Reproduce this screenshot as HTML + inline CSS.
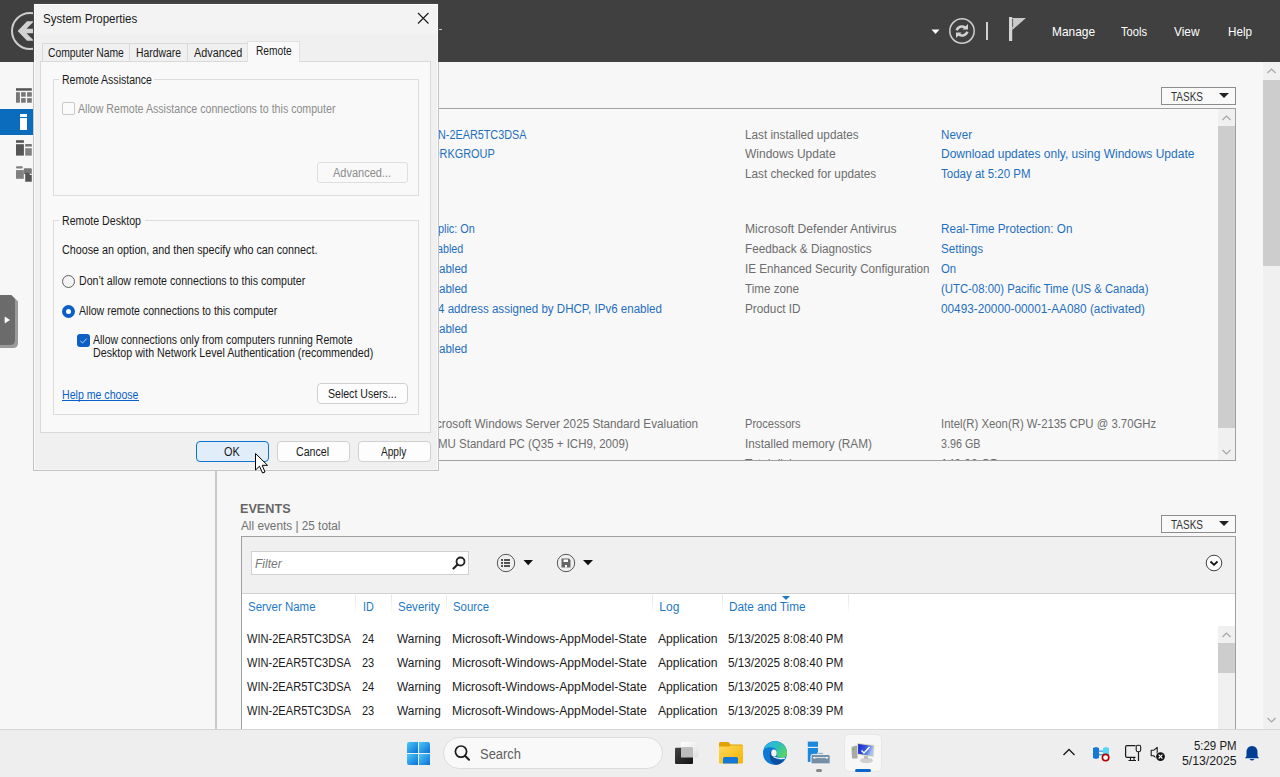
<!DOCTYPE html><html><head><meta charset="utf-8"><style>
html,body{margin:0;padding:0;width:1280px;height:777px;overflow:hidden;background:#f7f7f7;font-family:"Liberation Sans",sans-serif;}
div{position:absolute;box-sizing:border-box;}
.t{white-space:pre;transform-origin:0 0;}
svg{position:absolute;}
</style></head><body>
<div style="left:0px;top:0px;width:1280px;height:62px;background:#404040;"></div>
<svg style="left:0;top:0" width="60" height="62"><circle cx="30" cy="31" r="18" fill="none" stroke="#cdcdcd" stroke-width="2"/><path d="M17.7 31 L27 21.3 L34 21.3 L26.5 28.8 L42 28.8 L42 33.2 L26.5 33.2 L34 40.8 L27 40.8 Z" fill="#d2d2d2"/></svg>
<div style="left:439px;top:29px;width:3px;height:1px;background:#c8c8c8"></div>
<svg style="left:930px;top:28px" width="12" height="8"><path d="M1.5 1.5 L9.5 1.5 L5.5 6 Z" fill="#fff"/></svg>
<svg style="left:945px;top:15px" width="35" height="33"><circle cx="17" cy="16" r="12.2" fill="none" stroke="#cfcfcf" stroke-width="1.5"/>
<path d="M11.6 15.2 A5.6 5.6 0 0 1 20.2 12.6" fill="none" stroke="#d2d2d2" stroke-width="2.6"/><path d="M17.4 14.5 L23 14.5 L23 9 Z" fill="#d2d2d2"/>
<path d="M22.4 16.8 A5.6 5.6 0 0 1 13.8 19.4" fill="none" stroke="#d2d2d2" stroke-width="2.6"/><path d="M16.6 17.5 L11 17.5 L11 23 Z" fill="#d2d2d2"/></svg>
<div style="left:986px;top:22px;width:2px;height:18px;background:#d0d0d0;"></div>
<svg style="left:1008px;top:16px" width="20" height="26"><rect x="1" y="1" width="3.2" height="24" fill="#d4d4d4"/><path d="M4.2 2 L18 2 L4.2 14 Z" fill="#c9c9c9"/><rect x="4.2" y="3" width="0.9" height="8" fill="#555"/></svg>
<div class="t" style="left:1052px;top:25px;font-size:13px;line-height:13px;color:#ffffff;transform:scaleX(0.9154);">Manage</div>
<div class="t" style="left:1121px;top:25px;font-size:13px;line-height:13px;color:#ffffff;transform:scaleX(0.8568);">Tools</div>
<div class="t" style="left:1174px;top:25px;font-size:13px;line-height:13px;color:#ffffff;transform:scaleX(0.9126);">View</div>
<div class="t" style="left:1228px;top:25px;font-size:13px;line-height:13px;color:#ffffff;transform:scaleX(0.8977);">Help</div>
<div style="left:0px;top:109px;width:34px;height:26px;background:#0b6bbd;"></div>
<svg style="left:14px;top:86px" width="20" height="100">
<rect x="2" y="2.2" width="15.8" height="2.5" fill="#555"/>
<rect x="2" y="6.2" width="3.9" height="10.5" fill="#777"/><rect x="7.1" y="6.2" width="4.6" height="4.5" fill="#777"/><rect x="13.1" y="6.2" width="4.7" height="4.5" fill="#777"/>
<rect x="7.1" y="12.1" width="4.6" height="4.6" fill="#777"/><rect x="13.1" y="12.1" width="4.7" height="4.6" fill="#777"/>
<rect x="6" y="28" width="7" height="3" fill="#fff"/><rect x="6" y="32" width="7" height="12" fill="#fff"/>
<rect x="2" y="54.2" width="7.9" height="2.6" fill="#555"/><rect x="2" y="58.2" width="7.9" height="11.4" fill="#555"/><rect x="11.2" y="58" width="6.6" height="2.6" fill="#777"/><rect x="11.2" y="62.2" width="6.6" height="7.4" fill="#808080"/>
<rect x="2" y="80.2" width="6.8" height="2.4" rx="1" fill="#808080"/><rect x="2" y="84.1" width="7.8" height="8.7" fill="#808080"/><path d="M9.8 88 L9.8 83.2 Q9.8 82.2 10.8 82.2 L16.8 82.2 Q17.8 82.2 17.8 83.2 L17.8 88 Z" fill="#777"/>
<path d="M11.2 87 L15.8 87 L17.8 89 L17.8 95.8 L11.2 95.8 Z" fill="#555"/><path d="M15.8 87 L17.8 89 L15.8 89 Z" fill="#fff"/>
</svg>
<svg style="left:0;top:294px" width="20" height="56"><path d="M0 1 L11.5 1 L18 7.5 L18 49 Q18 54 13 54 L0 54 Z" fill="#9a9a9a"/><path d="M0 1 L11 1 L15 5 L15 46 Q15 51 10 51 L0 51 Z" fill="#6b6b6b"/><path d="M4.7 22.6 L10 26 L4.7 29.4 Z" fill="#fff"/></svg>
<div style="left:215px;top:62px;width:2px;height:667px;background:#c9c9c9;"></div>
<div style="left:1263px;top:62px;width:17px;height:667px;background:#f0f0f0;"></div>
<div style="left:1263px;top:80px;width:17px;height:186px;background:#cdcdcd;"></div>
<svg style="left:1263px;top:62px" width="17" height="18"><path d="M4.5 11 L8.5 7 L12.5 11" fill="none" stroke="#a6a6a6" stroke-width="1.2"/></svg>
<svg style="left:1263px;top:711px" width="17" height="18"><path d="M4.5 7 L8.5 11 L12.5 7" fill="none" stroke="#a6a6a6" stroke-width="1.2"/></svg>
<div style="left:1161px;top:87px;width:75px;height:18px;border:1px solid #8c8c8c;background:#f9f9f9;"></div>
<div class="t" style="left:1171px;top:91px;font-size:12px;line-height:12px;color:#333;transform:scaleX(0.8321);">TASKS</div>
<svg style="left:1218px;top:92px" width="12" height="8"><path d="M1 1 L11 1 L6 6 Z" fill="#222"/></svg>
<div style="left:241px;top:108px;width:995px;height:353px;border:1px solid #a0a0a0;border-right-width:1px;background:#f8f8f8;"></div>
<div style="left:1218px;top:109px;width:17px;height:351px;background:#f0f0f0;"></div>
<div style="left:1218px;top:126px;width:17px;height:302px;background:#cdcdcd;"></div>
<svg style="left:1218px;top:109px" width="17" height="17"><path d="M4.5 11 L8.5 7 L12.5 11" fill="none" stroke="#a6a6a6" stroke-width="1.2"/></svg>
<svg style="left:1218px;top:443px" width="17" height="17"><path d="M4.5 7 L8.5 11 L12.5 7" fill="none" stroke="#a6a6a6" stroke-width="1.2"/></svg>
<div class="t" style="left:437.8px;top:129px;font-size:12px;line-height:12px;color:#1f6fbf;transform:scaleX(0.9028);">N-2EAR5TC3DSA</div>
<div class="t" style="left:431.19309641532755px;top:148px;font-size:12px;line-height:12px;color:#1f6fbf;transform:scaleX(0.9114);">ORKGROUP</div>
<div class="t" style="left:438.45615592435354px;top:223px;font-size:12px;line-height:12px;color:#1f6fbf;transform:scaleX(0.9057);">plic: On</div>
<div class="t" style="left:437.3286222001818px;top:243px;font-size:12px;line-height:12px;color:#1f6fbf;transform:scaleX(0.8948);">abled</div>
<div class="t" style="left:439.0px;top:263px;font-size:12px;line-height:12px;color:#1f6fbf;transform:scaleX(0.9639);">abled</div>
<div class="t" style="left:439.0px;top:283px;font-size:12px;line-height:12px;color:#1f6fbf;transform:scaleX(0.9639);">abled</div>
<div class="t" style="left:438.3px;top:303px;font-size:12px;line-height:12px;color:#1f6fbf;transform:scaleX(0.9627);">4 address assigned by DHCP, IPv6 enabled</div>
<div class="t" style="left:439.0px;top:323px;font-size:12px;line-height:12px;color:#1f6fbf;transform:scaleX(0.9639);">abled</div>
<div class="t" style="left:439.0px;top:343px;font-size:12px;line-height:12px;color:#1f6fbf;transform:scaleX(0.9639);">abled</div>
<div class="t" style="left:435.8356642656347px;top:418px;font-size:12px;line-height:12px;color:#6d6d6d;transform:scaleX(0.9774);">crosoft Windows Server 2025 Standard Evaluation</div>
<div class="t" style="left:438.1px;top:438px;font-size:12px;line-height:12px;color:#6d6d6d;transform:scaleX(0.9574);">MU Standard PC (Q35 + ICH9, 2009)</div>
<div class="t" style="left:745.4px;top:129px;font-size:12px;line-height:12px;color:#6d6d6d;transform:scaleX(0.9787);">Last installed updates</div>
<div class="t" style="left:745.4px;top:148px;font-size:12px;line-height:12px;color:#6d6d6d;transform:scaleX(0.9988);">Windows Update</div>
<div class="t" style="left:745.4px;top:168px;font-size:12px;line-height:12px;color:#6d6d6d;transform:scaleX(0.9778);">Last checked for updates</div>
<div class="t" style="left:745.4px;top:223px;font-size:12px;line-height:12px;color:#6d6d6d;transform:scaleX(1.0103);">Microsoft Defender Antivirus</div>
<div class="t" style="left:745.4px;top:243px;font-size:12px;line-height:12px;color:#6d6d6d;transform:scaleX(0.9784);">Feedback &amp; Diagnostics</div>
<div class="t" style="left:745.4px;top:263px;font-size:12px;line-height:12px;color:#6d6d6d;transform:scaleX(0.9700);">IE Enhanced Security Configuration</div>
<div class="t" style="left:745.4px;top:283px;font-size:12px;line-height:12px;color:#6d6d6d;transform:scaleX(0.9717);">Time zone</div>
<div class="t" style="left:745.4px;top:303px;font-size:12px;line-height:12px;color:#6d6d6d;transform:scaleX(0.9808);">Product ID</div>
<div class="t" style="left:745.4px;top:418px;font-size:12px;line-height:12px;color:#6d6d6d;transform:scaleX(0.9264);">Processors</div>
<div class="t" style="left:745.4px;top:438px;font-size:12px;line-height:12px;color:#6d6d6d;transform:scaleX(0.9811);">Installed memory (RAM)</div>
<div class="t" style="left:940.9px;top:129px;font-size:12px;line-height:12px;color:#1f6fbf;transform:scaleX(0.9685);">Never</div>
<div class="t" style="left:940.9px;top:148px;font-size:12px;line-height:12px;color:#1f6fbf;transform:scaleX(1.0006);">Download updates only, using Windows Update</div>
<div class="t" style="left:940.9px;top:168px;font-size:12px;line-height:12px;color:#1f6fbf;transform:scaleX(0.9584);">Today at 5:20 PM</div>
<div class="t" style="left:940.9px;top:223px;font-size:12px;line-height:12px;color:#1f6fbf;transform:scaleX(0.9738);">Real-Time Protection: On</div>
<div class="t" style="left:940.9px;top:243px;font-size:12px;line-height:12px;color:#1f6fbf;transform:scaleX(0.9710);">Settings</div>
<div class="t" style="left:940.9px;top:263px;font-size:12px;line-height:12px;color:#1f6fbf;transform:scaleX(0.9433);">On</div>
<div class="t" style="left:940.9px;top:283px;font-size:12px;line-height:12px;color:#1f6fbf;transform:scaleX(0.9454);">(UTC-08:00) Pacific Time (US &amp; Canada)</div>
<div class="t" style="left:940.9px;top:303px;font-size:12px;line-height:12px;color:#1f6fbf;transform:scaleX(0.9833);">00493-20000-00001-AA080 (activated)</div>
<div class="t" style="left:940.9px;top:418px;font-size:12px;line-height:12px;color:#6d6d6d;transform:scaleX(0.9465);">Intel(R) Xeon(R) W-2135 CPU @ 3.70GHz</div>
<div class="t" style="left:940.9px;top:438px;font-size:12px;line-height:12px;color:#6d6d6d;transform:scaleX(0.8949);">3.96 GB</div>
<div style="left:700px;top:455px;width:500px;height:5px;overflow:hidden">
<div class="t" style="left:45px;top:3px;font-size:12px;line-height:12px;color:#6d6d6d;">Total disk space</div>
<div class="t" style="left:241px;top:3px;font-size:12px;line-height:12px;color:#6d6d6d;">148.92 GB</div>
</div>
<div class="t" style="left:240.4px;top:502px;font-size:13.5px;line-height:13.5px;color:#666;font-weight:bold;transform:scaleX(0.9368);">EVENTS</div>
<div class="t" style="left:240.6px;top:520px;font-size:12px;line-height:12px;color:#707070;transform:scaleX(0.9825);">All events | 25 total</div>
<div style="left:1161px;top:515px;width:75px;height:18px;border:1px solid #8c8c8c;background:#f9f9f9;"></div>
<div class="t" style="left:1171px;top:519px;font-size:12px;line-height:12px;color:#333;transform:scaleX(0.8321);">TASKS</div>
<svg style="left:1218px;top:520px" width="12" height="8"><path d="M1 1 L11 1 L6 6 Z" fill="#222"/></svg>
<div style="left:241px;top:536px;width:995px;height:194px;border:1px solid #a0a0a0;border-bottom:none;background:#fff;"></div>
<div style="left:242px;top:537px;width:993px;height:57px;background:#f0f0f0;border-bottom:1px solid #d2d2d2;"></div>
<div style="left:251px;top:551px;width:218px;height:24px;background:#fff;border:1px solid #d0d0d0;"></div>
<div class="t" style="left:255px;top:558px;font-size:12px;line-height:12px;color:#777;font-style:italic;">Filter</div>
<svg style="left:451px;top:555px" width="16" height="16"><circle cx="9.5" cy="6.5" r="4" fill="none" stroke="#222" stroke-width="1.8"/><path d="M6.5 9.5 L2.5 13.5" stroke="#222" stroke-width="2.2" stroke-linecap="round"/></svg>
<svg style="left:495px;top:552px" width="42" height="22"><circle cx="11" cy="11" r="8.7" fill="none" stroke="#555" stroke-width="1"/>
<rect x="6" y="7" width="2" height="2" fill="#555"/><rect x="9" y="7" width="6" height="2" fill="#555"/>
<rect x="6" y="10" width="2" height="2" fill="#555"/><rect x="9" y="10" width="6" height="2" fill="#555"/>
<rect x="6" y="13" width="2" height="2" fill="#555"/><rect x="9" y="13" width="6" height="2" fill="#555"/>
<path d="M28.5 8 L38 8 L33.2 13.3 Z" fill="#111"/></svg>
<svg style="left:555px;top:552px" width="42" height="22"><circle cx="11" cy="11" r="8.7" fill="none" stroke="#555" stroke-width="1"/>
<path d="M6.5 6.5 L14 6.5 L15.5 8 L15.5 15.5 L6.5 15.5 Z" fill="#666"/><rect x="8.5" y="7.5" width="4.5" height="2.5" fill="#fff"/><rect x="10" y="13" width="2" height="2.5" fill="#fff"/>
<path d="M28 8 L38 8 L33 13.3 Z" fill="#111"/></svg>
<svg style="left:1204px;top:553px" width="20" height="20"><circle cx="10" cy="10" r="7.8" fill="#fff" stroke="#444" stroke-width="1"/><path d="M6.5 8.5 L10 11.8 L13.5 8.5" fill="none" stroke="#111" stroke-width="1.8"/></svg>
<div class="t" style="left:248.1px;top:601px;font-size:12px;line-height:12px;color:#1e78c8;transform:scaleX(0.9550);">Server Name</div>
<div class="t" style="left:362.9px;top:601px;font-size:12px;line-height:12px;color:#1e78c8;transform:scaleX(0.9000);">ID</div>
<div class="t" style="left:398.4px;top:601px;font-size:12px;line-height:12px;color:#1e78c8;transform:scaleX(0.9620);">Severity</div>
<div class="t" style="left:452.7px;top:601px;font-size:12px;line-height:12px;color:#1e78c8;transform:scaleX(0.9495);">Source</div>
<div class="t" style="left:659.3px;top:601px;font-size:12px;line-height:12px;color:#1e78c8;">Log</div>
<div class="t" style="left:729.4px;top:601px;font-size:12px;line-height:12px;color:#1e78c8;transform:scaleX(0.9816);">Date and Time</div>
<div style="left:355px;top:595px;width:1px;height:20px;background:linear-gradient(#e4e4e4,#fff);"></div>
<div style="left:391px;top:595px;width:1px;height:20px;background:linear-gradient(#e4e4e4,#fff);"></div>
<div style="left:446px;top:595px;width:1px;height:20px;background:linear-gradient(#e4e4e4,#fff);"></div>
<div style="left:652px;top:595px;width:1px;height:20px;background:linear-gradient(#e4e4e4,#fff);"></div>
<div style="left:722px;top:595px;width:1px;height:20px;background:linear-gradient(#e4e4e4,#fff);"></div>
<div style="left:848px;top:595px;width:1px;height:20px;background:linear-gradient(#e4e4e4,#fff);"></div>
<svg style="left:781px;top:595px" width="10" height="6"><path d="M1 1 L9 1 L5 5 Z" fill="#1e78c8"/></svg>
<div class="t" style="left:247px;top:633px;font-size:12px;line-height:12px;color:#1a1a1a;transform:scaleX(0.9229);">WIN-2EAR5TC3DSA</div>
<div class="t" style="left:361.7px;top:633px;font-size:12px;line-height:12px;color:#1a1a1a;transform:scaleX(0.9141);">24</div>
<div class="t" style="left:397.4px;top:633px;font-size:12px;line-height:12px;color:#1a1a1a;transform:scaleX(0.9901);">Warning</div>
<div class="t" style="left:452.4px;top:633px;font-size:12px;line-height:12px;color:#1a1a1a;transform:scaleX(1.0173);">Microsoft-Windows-AppModel-State</div>
<div class="t" style="left:657.9px;top:633px;font-size:12px;line-height:12px;color:#1a1a1a;transform:scaleX(1.0119);">Application</div>
<div class="t" style="left:728.4px;top:633px;font-size:12px;line-height:12px;color:#1a1a1a;transform:scaleX(0.9756);">5/13/2025 8:08:40 PM</div>
<div class="t" style="left:247px;top:657px;font-size:12px;line-height:12px;color:#1a1a1a;transform:scaleX(0.9229);">WIN-2EAR5TC3DSA</div>
<div class="t" style="left:361.7px;top:657px;font-size:12px;line-height:12px;color:#1a1a1a;transform:scaleX(0.9141);">23</div>
<div class="t" style="left:397.4px;top:657px;font-size:12px;line-height:12px;color:#1a1a1a;transform:scaleX(0.9901);">Warning</div>
<div class="t" style="left:452.4px;top:657px;font-size:12px;line-height:12px;color:#1a1a1a;transform:scaleX(1.0173);">Microsoft-Windows-AppModel-State</div>
<div class="t" style="left:657.9px;top:657px;font-size:12px;line-height:12px;color:#1a1a1a;transform:scaleX(1.0119);">Application</div>
<div class="t" style="left:728.4px;top:657px;font-size:12px;line-height:12px;color:#1a1a1a;transform:scaleX(0.9756);">5/13/2025 8:08:40 PM</div>
<div class="t" style="left:247px;top:681px;font-size:12px;line-height:12px;color:#1a1a1a;transform:scaleX(0.9229);">WIN-2EAR5TC3DSA</div>
<div class="t" style="left:361.7px;top:681px;font-size:12px;line-height:12px;color:#1a1a1a;transform:scaleX(0.9141);">24</div>
<div class="t" style="left:397.4px;top:681px;font-size:12px;line-height:12px;color:#1a1a1a;transform:scaleX(0.9901);">Warning</div>
<div class="t" style="left:452.4px;top:681px;font-size:12px;line-height:12px;color:#1a1a1a;transform:scaleX(1.0173);">Microsoft-Windows-AppModel-State</div>
<div class="t" style="left:657.9px;top:681px;font-size:12px;line-height:12px;color:#1a1a1a;transform:scaleX(1.0119);">Application</div>
<div class="t" style="left:728.4px;top:681px;font-size:12px;line-height:12px;color:#1a1a1a;transform:scaleX(0.9756);">5/13/2025 8:08:40 PM</div>
<div class="t" style="left:247px;top:705px;font-size:12px;line-height:12px;color:#1a1a1a;transform:scaleX(0.9229);">WIN-2EAR5TC3DSA</div>
<div class="t" style="left:361.7px;top:705px;font-size:12px;line-height:12px;color:#1a1a1a;transform:scaleX(0.9141);">23</div>
<div class="t" style="left:397.4px;top:705px;font-size:12px;line-height:12px;color:#1a1a1a;transform:scaleX(0.9901);">Warning</div>
<div class="t" style="left:452.4px;top:705px;font-size:12px;line-height:12px;color:#1a1a1a;transform:scaleX(1.0173);">Microsoft-Windows-AppModel-State</div>
<div class="t" style="left:657.9px;top:705px;font-size:12px;line-height:12px;color:#1a1a1a;transform:scaleX(1.0119);">Application</div>
<div class="t" style="left:728.4px;top:705px;font-size:12px;line-height:12px;color:#1a1a1a;transform:scaleX(0.9756);">5/13/2025 8:08:39 PM</div>
<div style="left:1218px;top:626px;width:17px;height:103px;background:#f0f0f0;"></div>
<div style="left:1218px;top:643px;width:17px;height:30px;background:#cdcdcd;"></div>
<svg style="left:1218px;top:626px" width="17" height="17"><path d="M4.5 11 L8.5 7 L12.5 11" fill="none" stroke="#a6a6a6" stroke-width="1.2"/></svg>
<div style="left:0px;top:729px;width:1280px;height:48px;background:#eeeeee;border-top:1px solid #d6d6d6;"></div>
<svg style="left:407px;top:742px" width="24" height="24"><defs><linearGradient id="wg" x1="0" y1="0" x2="1" y2="1"><stop offset="0" stop-color="#4ccaf9"/><stop offset="1" stop-color="#0a6fd6"/></linearGradient></defs>
<g fill="url(#wg)"><path d="M0 2 Q0 0 2 0 L11 0 L11 11 L0 11 Z"/><path d="M12 0 L21 0 Q23 0 23 2 L23 11 L12 11 Z"/><path d="M0 12 L11 12 L11 23 L2 23 Q0 23 0 21 Z"/><path d="M12 12 L23 12 L23 23 L12 23 Z"/></g></svg>
<div style="left:443px;top:737px;width:220px;height:32px;background:#f9f9f9;border:1px solid #dcdcdc;border-radius:16px;"></div>
<svg style="left:453px;top:744px" width="20" height="20"><circle cx="8" cy="7.6" r="5.6" fill="none" stroke="#1b1b1b" stroke-width="1.7"/><path d="M12 11.8 L16 15.8" stroke="#1b1b1b" stroke-width="2" stroke-linecap="round"/></svg>
<div class="t" style="left:480px;top:746.5px;font-size:14px;line-height:14px;color:#5f5f5f;transform:scaleX(0.9243);">Search</div>
<svg style="left:674px;top:741px" width="26" height="26"><defs><linearGradient id="tv1" x1="0" y1="0" x2="1" y2="1"><stop offset="0" stop-color="#ffffff"/><stop offset="1" stop-color="#e0e0e0"/></linearGradient><linearGradient id="tv2" x1="0" y1="0" x2="1" y2="1"><stop offset="0" stop-color="#444"/><stop offset="1" stop-color="#111"/></linearGradient></defs>
<rect x="7" y="1" width="17.4" height="15.6" rx="1" fill="url(#tv1)"/><rect x="1" y="6.8" width="18" height="16.2" rx="1" fill="url(#tv2)"/><rect x="7" y="6.8" width="12" height="9.8" rx="0.5" fill="#bdbdbd"/></svg>
<svg style="left:719px;top:741px" width="25" height="24"><defs><linearGradient id="fy" x1="0" y1="0" x2="1" y2="1"><stop offset="0" stop-color="#ffd75c"/><stop offset="1" stop-color="#f4b400"/></linearGradient></defs>
<path d="M0 2.5 Q0 1 1.5 1 L9.5 1 L11.5 3.5 L22.5 3.5 Q24 3.5 24 5 L24 8 L0 8 Z" fill="#e1a200"/><path d="M0 5.5 L10 5.5 L12 4.5 L22.5 4.5 Q24 4.5 24 6 L24 21.5 Q24 22.5 23 22.5 L1 22.5 Q0 22.5 0 21.5 Z" fill="url(#fy)"/><path d="M4 22.5 L4 17.5 Q4 16 5.5 16 L17.5 16 Q19 16 19 17.5 L19 22.5 Z" fill="#1479d6"/></svg>
<svg style="left:762px;top:740px" width="26" height="26"><defs><linearGradient id="eg" x1="0" y1="0.2" x2="1" y2="0.7"><stop offset="0" stop-color="#2cb2f0"/><stop offset="0.55" stop-color="#2fc0b8"/><stop offset="1" stop-color="#5bd85a"/></linearGradient></defs>
<circle cx="13" cy="13" r="12" fill="#1079d4"/>
<path d="M1.8 9 C4.5 3 10 0.6 15.5 1.4 C21 2.4 25 7.5 25 13 C25 15.8 23 17.8 20 17.8 C16.5 17.8 14.2 16.4 14.3 13.5 C14.4 11.5 15 10.8 14 9.5 C12.5 7.3 6.5 6.2 1.8 9 Z" fill="url(#eg)"/>
<path d="M9.4 10.2 C6.6 14 7.3 22 12.5 24.3 C16.5 25.6 20 23.2 21.9 19.6 C18 20.6 14.5 19.6 12.3 17.6 C10.5 16 9.6 13.5 9.4 10.2 Z" fill="#0b4f9e"/>
<ellipse cx="11.9" cy="13" rx="2.7" ry="3.6" fill="#f3f3f3"/><path d="M11.5 16.8 Q16 19.3 23 18.2" fill="none" stroke="#f3f3f3" stroke-width="1.2"/></svg>
<svg style="left:806px;top:740px" width="26" height="26"><rect x="1.8" y="1.6" width="10.2" height="5.2" fill="#1a88dc"/><rect x="1.8" y="8" width="10.2" height="13.9" fill="#1a88dc"/>
<rect x="11.8" y="12.8" width="5.5" height="2.5" fill="#7590a6" stroke="#eee" stroke-width="0.8"/><path d="M5 16.2 Q5 14.4 6.8 14.4 L22.5 14.4 Q24.2 14.4 24.2 16.2 L24.2 23.9 L5 23.9 Z" fill="#7590a6" stroke="#f4f4f4" stroke-width="1"/>
<path d="M7 17.6 L22.3 17.6" stroke="#f0f0f0" stroke-width="0.9"/><circle cx="8.5" cy="17.8" r="0.9" fill="#fff"/><circle cx="20.8" cy="17.8" r="0.9" fill="#fff"/></svg>
<div style="left:816px;top:769px;width:6px;height:3px;background:#888;border-radius:2px;"></div>
<div style="left:844px;top:734px;width:38px;height:38px;background:#f7f7f7;border-radius:5px;border:1px solid #e8e8e8;"></div>
<svg style="left:850px;top:741px" width="26" height="25"><defs><linearGradient id="sp" x1="0" y1="0" x2="1" y2="0.3"><stop offset="0" stop-color="#1424c8"/><stop offset="0.6" stop-color="#3a5fe0"/><stop offset="1" stop-color="#a8c4f4"/></linearGradient></defs>
<path d="M1.5 6 L6 4.5 L7.5 5 L7.5 17.5 L2 17.5 Z" fill="#a9a9a9"/><rect x="2.5" y="7.3" width="2" height="1.5" fill="#63c03c"/>
<path d="M7.2 2 L24.4 4 L23.6 16 L7 13.6 Z" fill="#d9d4b8"/><path d="M8.2 3.1 L23.4 4.9 L22.7 15 L8 12.8 Z" fill="url(#sp)"/><path d="M11.5 9.5 L14 12 L19.5 6" fill="none" stroke="#fff" stroke-width="1.4"/>
<ellipse cx="16.5" cy="19.5" rx="6.5" ry="2.8" fill="#cfcfcf"/><rect x="14" y="15" width="4" height="3" fill="#bdbdbd"/></svg>
<div style="left:855px;top:769px;width:16px;height:3px;background:#0a67c9;border-radius:2px;"></div>
<svg style="left:1062px;top:747px" width="14" height="10"><path d="M1.5 8 L7 2.5 L12.5 8" fill="none" stroke="#1a1a1a" stroke-width="1.3"/></svg>
<svg style="left:1092px;top:746px" width="19" height="16"><path d="M4 1 L7 2 L7 12 L4 13 L1 12 L1 2 Z" fill="#1478d4"/><path d="M14 1 L17 2 L17 12 L14 13 L11 12 L11 2 Z" fill="#58d6f6"/><rect x="7" y="4.5" width="4" height="1.3" fill="#3aa0e0"/><rect x="7" y="8" width="4" height="1.3" fill="#3aa0e0"/><circle cx="13.6" cy="11.6" r="3.2" fill="#fff" stroke="#b40000" stroke-width="1.6"/></svg>
<svg style="left:1124px;top:744px" width="18" height="18"><path d="M11.5 1.6 L3 1.6 Q1.6 1.6 1.6 3 L1.6 12 Q1.6 13.4 3 13.4 L11.5 13.4" fill="none" stroke="#1a1a1a" stroke-width="1.2"/><path d="M4.5 16.5 L12 16.5 M6.5 13.4 L6.5 16.5 M10 13.4 L10 16.5" stroke="#1a1a1a" stroke-width="1.1"/><rect x="12.2" y="1.2" width="4.5" height="6.5" rx="1.6" fill="none" stroke="#1a1a1a" stroke-width="1.1"/><path d="M14.5 7.7 L14.5 17" stroke="#1a1a1a" stroke-width="1.2"/></svg>
<svg style="left:1150px;top:746px" width="17" height="16"><path d="M1.2 4.3 L3.6 4.3 L7.2 1.3 L7.2 12.5 L3.6 9.8 L1.2 9.8 Z" fill="none" stroke="#1a1a1a" stroke-width="1.1" stroke-linejoin="round"/><circle cx="10.5" cy="10.6" r="5.2" fill="#eeeeee"/><circle cx="10.5" cy="10.6" r="4.4" fill="#141414"/><path d="M8.6 8.7 L12.4 12.5 M12.4 8.7 L8.6 12.5" stroke="#fff" stroke-width="1.1"/></svg>
<div class="t" style="left:1194px;top:739.5px;font-size:12px;line-height:12px;color:#1a1a1a;transform:scaleX(0.9511);">5:29 PM</div>
<div class="t" style="left:1182px;top:755px;font-size:12px;line-height:12px;color:#1a1a1a;transform:scaleX(1.0210);">5/13/2025</div>
<svg style="left:1244px;top:745px" width="16" height="17"><path d="M8 1 Q13.5 1 13.5 7.5 L13.5 11 L15 13.2 L1 13.2 L2.5 11 L2.5 7.5 Q2.5 1 8 1 Z" fill="#003f94"/><path d="M5.5 14 Q8 17 10.5 14 Z" fill="#003f94"/></svg>
<div style="left:33px;top:3px;width:406px;height:468px;background:#f0f0f0;border:1px solid #c4c4c4;z-index:10;overflow:hidden;">
<div style="left:0px;top:0px;width:404px;height:30px;background:#f3f3f3;"></div>
<div style="left:0px;top:0px;width:404px;height:1px;background:#fdfdfd;"></div>
<div style="left:0px;top:0px;width:1px;height:466px;background:#f9f9f9;"></div>
<div style="left:403px;top:0px;width:1px;height:466px;background:#f9f9f9;"></div>
<div style="left:0px;top:465px;width:404px;height:1px;background:#f6f6f6;"></div>
<div class="t" style="left:9.200000000000003px;top:9.2px;font-size:12px;line-height:12px;color:#1a1a1a;transform:scaleX(0.9620);">System Properties</div>
<svg style="left:383px;top:8px" width="13" height="13"><path d="M1 1 L11.5 11.5 M11.5 1 L1 11.5" stroke="#1a1a1a" stroke-width="1.1"/></svg>
<div style="left:8px;top:39px;width:88px;height:19px;background:#f0f0f0;border:1px solid #d9d9d9;border-bottom:none;"></div>
<div style="left:95px;top:39px;width:59px;height:19px;background:#f0f0f0;border:1px solid #d9d9d9;border-bottom:none;"></div>
<div style="left:153px;top:39px;width:61px;height:19px;background:#f0f0f0;border:1px solid #d9d9d9;border-bottom:none;"></div>
<div style="left:6px;top:57px;width:391px;height:372px;background:#f9f9f9;border:1px solid #d9d9d9;"></div>
<div style="left:213px;top:37px;width:53px;height:21px;background:#f9f9f9;border:1px solid #e0e0e0;border-bottom:none;"></div>
<div class="t" style="left:13.5px;top:43px;font-size:12px;line-height:12px;color:#1a1a1a;transform:scaleX(0.8611);">Computer Name</div>
<div class="t" style="left:102.19999999999999px;top:43px;font-size:12px;line-height:12px;color:#1a1a1a;transform:scaleX(0.8651);">Hardware</div>
<div class="t" style="left:159.8px;top:43px;font-size:12px;line-height:12px;color:#1a1a1a;transform:scaleX(0.9031);">Advanced</div>
<div class="t" style="left:221.6px;top:41px;font-size:12px;line-height:12px;color:#1a1a1a;transform:scaleX(0.8497);">Remote</div>
<div style="left:19px;top:75px;width:366px;height:117px;border:1px solid #dcdcdc;"></div>
<div style="left:25px;top:70px;width:95px;height:12px;background:#f9f9f9;"></div>
<div class="t" style="left:28px;top:69.6px;font-size:12px;line-height:12px;color:#1a1a1a;transform:scaleX(0.8753);">Remote Assistance</div>
<div style="left:28px;top:98px;width:13px;height:13px;border:1px solid #c9c9c9;border-radius:2px;background:#fbfbfb;"></div>
<div class="t" style="left:44.400000000000006px;top:98.5px;font-size:12px;line-height:12px;color:#8c8c8c;transform:scaleX(0.8852);">Allow Remote Assistance connections to this computer</div>
<div style="left:283px;top:158px;width:91px;height:21px;border:1px solid #dedede;border-radius:3px;background:#f9f9f9;"></div>
<div class="t" style="left:298.8px;top:163px;font-size:12px;line-height:12px;color:#8c8c8c;transform:scaleX(0.9168);">Advanced...</div>
<div style="left:19px;top:216px;width:366px;height:195px;border:1px solid #dcdcdc;"></div>
<div style="left:25px;top:210px;width:86px;height:12px;background:#f9f9f9;"></div>
<div class="t" style="left:28px;top:211px;font-size:12px;line-height:12px;color:#1a1a1a;transform:scaleX(0.8840);">Remote Desktop</div>
<div class="t" style="left:28px;top:240px;font-size:12px;line-height:12px;color:#1a1a1a;transform:scaleX(0.8966);">Choose an option, and then specify who can connect.</div>
<div style="left:28px;top:271px;width:13px;height:13px;border:1px solid #5f5f5f;border-radius:50%;background:#f3f3f3;"></div>
<div class="t" style="left:44.599999999999994px;top:271px;font-size:12px;line-height:12px;color:#1a1a1a;transform:scaleX(0.8855);">Don’t allow remote connections to this computer</div>
<div style="left:28px;top:301px;width:13px;height:13px;background:#0c5fc5;border-radius:50%;"></div>
<div style="left:32px;top:305px;width:5px;height:5px;background:#fff;border-radius:50%;"></div>
<div class="t" style="left:44.599999999999994px;top:301px;font-size:12px;line-height:12px;color:#1a1a1a;transform:scaleX(0.8792);">Allow remote connections to this computer</div>
<div style="left:43px;top:330px;width:13px;height:13px;background:#0c5fc5;border-radius:3px;"></div>
<svg style="left:43px;top:330px" width="13" height="13"><path d="M3.3 6.9 L5.6 9 L9.6 4.6" fill="none" stroke="#e8eef8" stroke-width="0.8"/></svg>
<div class="t" style="left:59.400000000000006px;top:330.4px;font-size:12px;line-height:12px;color:#1a1a1a;transform:scaleX(0.8747);">Allow connections only from computers running Remote</div>
<div class="t" style="left:59.400000000000006px;top:342.7px;font-size:12px;line-height:12px;color:#1a1a1a;transform:scaleX(0.8901);">Desktop with Network Level Authentication (recommended)</div>
<div class="t" style="left:28.299999999999997px;top:385px;font-size:12px;line-height:12px;color:#0a5fc8;transform:scaleX(0.8823);">Help me choose</div>
<div style="left:28px;top:396px;width:77px;height:1px;background:#0a5fc8;"></div>
<div style="left:283px;top:379px;width:91px;height:21px;border:1px solid #d0d0d0;border-radius:4px;background:#fdfdfd;"></div>
<div class="t" style="left:294px;top:384.4px;font-size:12px;line-height:12px;color:#1a1a1a;transform:scaleX(0.8793);">Select Users...</div>
<div style="left:162px;top:437px;width:73px;height:21px;border:1px solid #0a74d0;border-radius:4px;background:#e1eefa;"></div>
<div class="t" style="left:190px;top:442.3px;font-size:12px;line-height:12px;color:#1a1a1a;transform:scaleX(0.9113);">OK</div>
<div style="left:243px;top:437px;width:73px;height:21px;border:1px solid #d0d0d0;border-radius:4px;background:#fdfdfd;"></div>
<div class="t" style="left:262.2px;top:442.3px;font-size:12px;line-height:12px;color:#1a1a1a;transform:scaleX(0.8862);">Cancel</div>
<div style="left:324px;top:437px;width:73px;height:21px;border:1px solid #d0d0d0;border-radius:4px;background:#fdfdfd;"></div>
<div class="t" style="left:347px;top:442.3px;font-size:12px;line-height:12px;color:#1a1a1a;transform:scaleX(0.8429);">Apply</div>
</div>
<div style="left:33px;top:3px;width:406px;height:1px;background:#474747;z-index:11"></div>
<div style="left:33px;top:3px;width:1px;height:59px;background:#474747;z-index:11"></div>
<div style="left:438px;top:3px;width:1px;height:59px;background:#474747;z-index:11"></div>
<svg style="left:254px;top:452px;z-index:20" width="16" height="24"><path d="M1.5 1.5 L1.5 18 L5.5 14.2 L8.5 21 L11 20 L8.2 13.3 L13.5 13.3 Z" fill="#fff" stroke="#000" stroke-width="1" stroke-linejoin="round"/></svg>
</body></html>
